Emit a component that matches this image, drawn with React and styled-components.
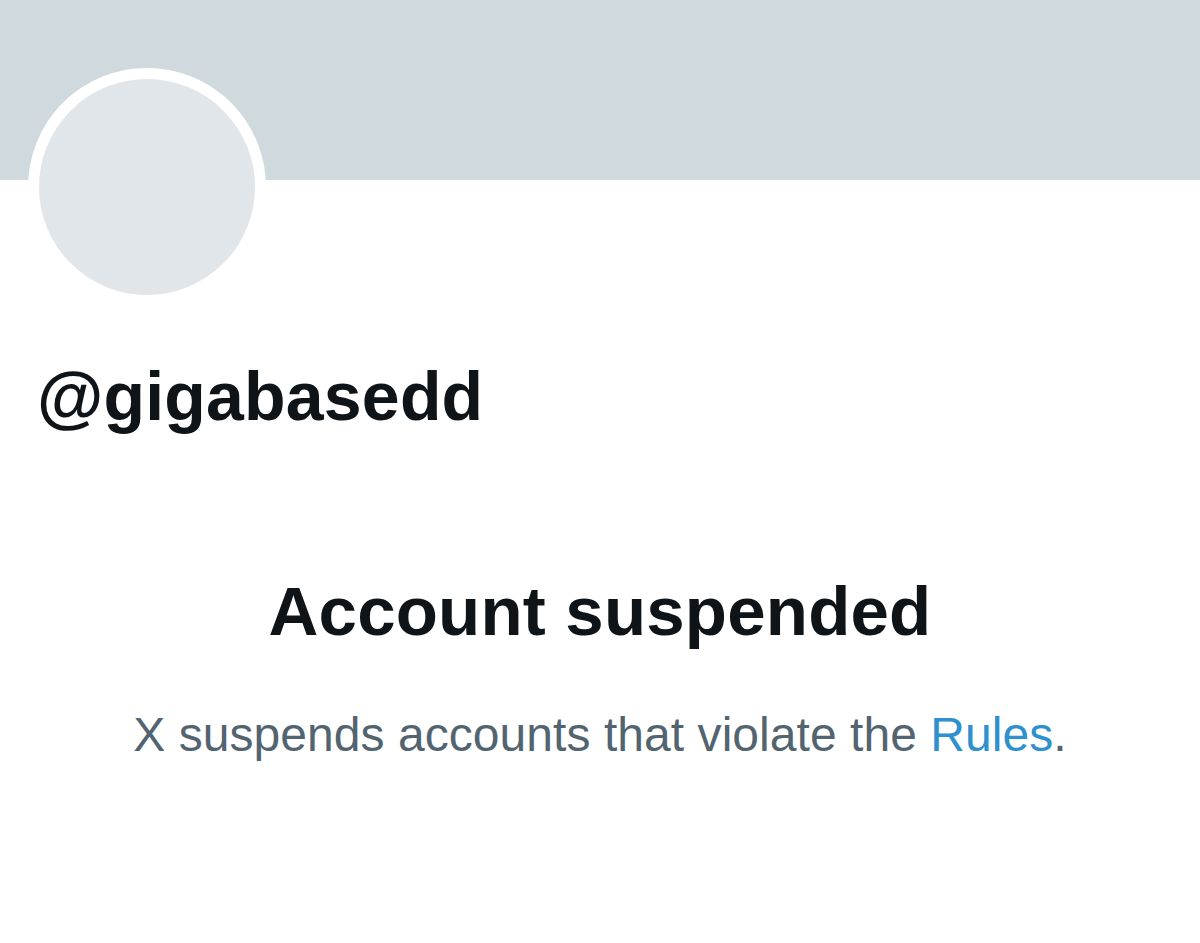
import styled, { createGlobalStyle } from 'styled-components';

const GlobalStyle = createGlobalStyle`
  html, body {
    margin: 0;
    padding: 0;
    background: #ffffff;
  }
  body {
    font-family: "Liberation Sans", Arial, sans-serif;
    color: #0f1419;
  }
`;

const Page = styled.div`
  width: 1200px;
  height: 943px;
  overflow: hidden;
  display: flex;
  flex-direction: column;
`;

const Banner = styled.div`
  height: 180px;
  background: #cfd9de;
  flex-shrink: 0;
`;

const ProfileHead = styled.div`
  padding: 0 0 0 28px;
  margin-top: -112px;
`;

const Avatar = styled.div`
  width: 216px;
  height: 216px;
  border-radius: 50%;
  border: 11px solid #ffffff;
  background: #e0e6ea;
`;

const Handle = styled.div`
  margin: 50px 0 0 37px;
  font-size: 68px;
  font-weight: 700;
  line-height: 80px;
  letter-spacing: 0.2px;
`;

const Notice = styled.div`
  display: flex;
  flex-direction: column;
  align-items: center;
  margin-top: 136px;
`;

const Title = styled.h1`
  margin: 0;
  font-size: 69px;
  font-weight: 700;
  line-height: 80px;
  letter-spacing: 0.2px;
`;

const Subtitle = styled.p`
  margin: 55px 0 0;
  font-size: 48px;
  line-height: 56px;
  color: #536471;
  letter-spacing: 0.05px;
`;

const RulesLink = styled.a`
  color: #2e90cc;
  text-decoration: none;
`;

export default function App() {
  return (
    <Page>
      <GlobalStyle />
      <Banner />
      <ProfileHead>
        <Avatar />
      </ProfileHead>
      <Handle>@gigabasedd</Handle>
      <Notice>
        <Title>Account suspended</Title>
        <Subtitle>
          X suspends accounts that violate the <RulesLink href="#">Rules</RulesLink>.
        </Subtitle>
      </Notice>
    </Page>
  );
}
